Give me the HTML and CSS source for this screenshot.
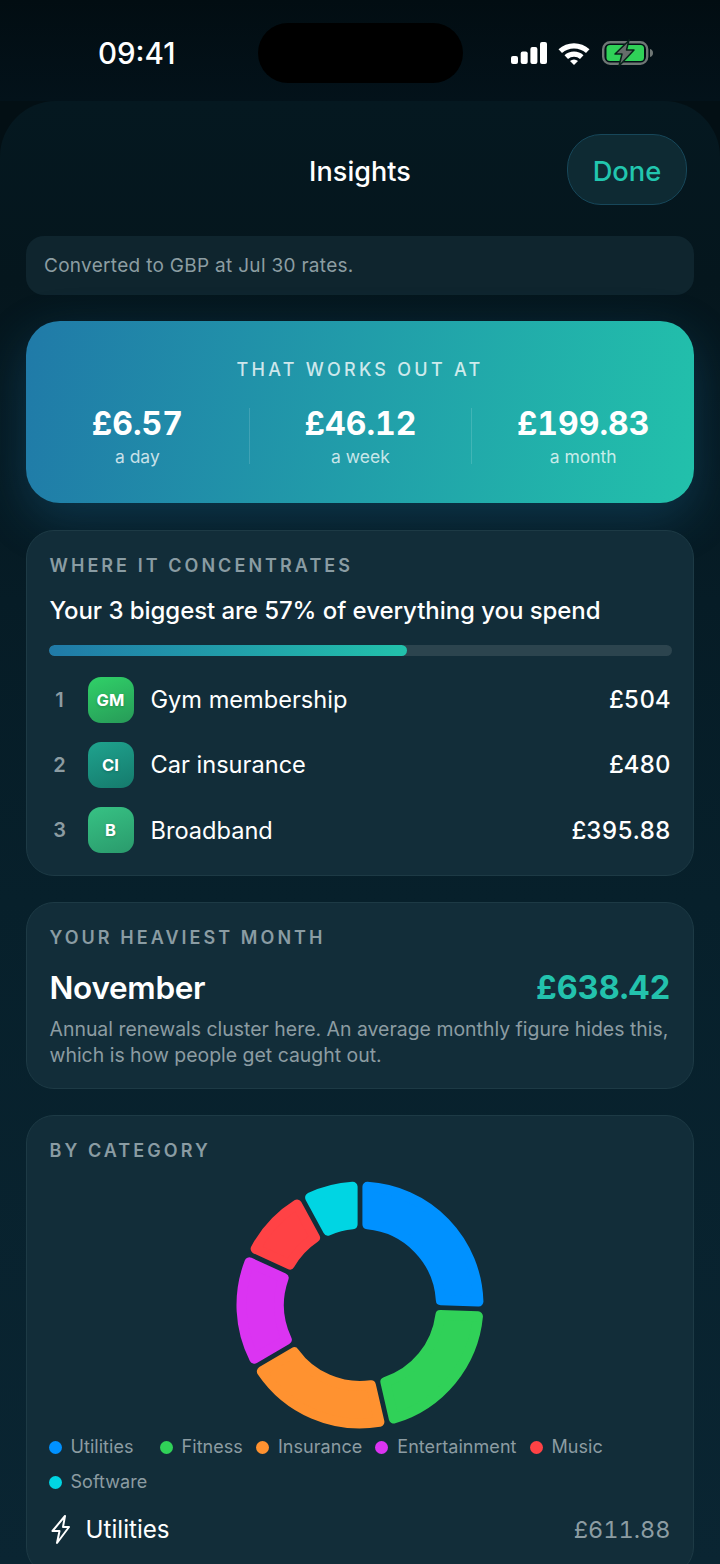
FILE: index.html
```html
<!DOCTYPE html>
<html lang="en">
<head>
<meta charset="utf-8">
<title>Insights</title>
<link rel="stylesheet" href="styles.css">
</head>
<body>
<div class="phone">
  <header class="status">
    <span class="time">09:41</span>
    <span class="island"></span>
    <span class="status-icons">
      <svg class="signal" width="36" height="22" viewBox="0 0 36 22"><rect x="0" y="14" width="7" height="8" rx="2"/><rect x="9.700" y="9.500" width="7" height="12.500" rx="2"/><rect x="19.400" y="5" width="7" height="17" rx="2"/><rect x="29" y="0" width="7" height="22" rx="2"/></svg>
      <svg class="wifi" width="32" height="23" viewBox="0 0 32 23"><path d="M.5 7.200A23 23 0 0 1 31.500 7.200L28 11A18 18 0 0 0 4 11Z"/><path d="M6.500 13.300A14 14 0 0 1 25.500 13.300L22 17A9 9 0 0 0 10 17Z"/><path d="M12 19A6 6 0 0 1 20 19L16 23Z"/></svg>
      <svg class="battery" width="52" height="28" viewBox="0 0 52 28"><rect x="1.200" y="3.200" width="44" height="21.600" rx="7" fill="none" stroke="#6f7775" stroke-width="2.400"/><rect x="4.500" y="6" width="37.500" height="16" rx="3.500" fill="#30d158"/><path d="M48 10c2 .5 3 2 3 4s-1 3.500-3 4Z" fill="#6f7775"/><path d="M27.500 1 13 15h7l-3 12 15-16h-7.500l2.500-10Z" fill="#666d6b" stroke="#08231a" stroke-width="1.500" stroke-linejoin="round"/></svg>
    </span>
  </header>

  <main class="sheet">
    <div class="nav">
      <h1 class="nav-title">Insights</h1>
      <button class="done">Done</button>
    </div>

    <p class="note">Converted to GBP at Jul 30 rates.</p>

    <section class="hero">
      <h2 class="hero-label">THAT WORKS OUT AT</h2>
      <div class="hero-stats">
        <div class="stat"><strong class="stat-value">£6.57</strong><span class="stat-sub">a day</span></div>
        <div class="stat stat-div"><strong class="stat-value">£46.12</strong><span class="stat-sub">a week</span></div>
        <div class="stat stat-div"><strong class="stat-value">£199.83</strong><span class="stat-sub">a month</span></div>
      </div>
    </section>

    <section class="card card-top">
      <h2 class="label">WHERE IT CONCENTRATES</h2>
      <p class="headline">Your 3 biggest are 57% of everything you spend</p>
      <div class="bar"><div class="bar-fill"></div></div>
      <ul class="rank-list">
        <li class="rank-row"><span class="rank">1</span><span class="badge badge-gm">GM</span><span class="rank-name">Gym membership</span><span class="rank-amt">£504</span></li>
        <li class="rank-row"><span class="rank">2</span><span class="badge badge-ci">CI</span><span class="rank-name">Car insurance</span><span class="rank-amt">£480</span></li>
        <li class="rank-row"><span class="rank">3</span><span class="badge badge-b">B</span><span class="rank-name">Broadband</span><span class="rank-amt">£395.88</span></li>
      </ul>
    </section>

    <section class="card card-month">
      <h2 class="label">YOUR HEAVIEST MONTH</h2>
      <div class="month-row"><span class="month-name">November</span><span class="month-amt">£638.42</span></div>
      <p class="month-desc">Annual renewals cluster here. An average monthly figure hides this, which is how people get caught out.</p>
    </section>

    <section class="card card-cat">
      <h2 class="label">BY CATEGORY</h2>
      <svg class="donut" width="248" height="248" viewBox="0 0 248 248">
        <path class="seg seg-blue" d="M131.4 5.73A118.5 118.5 0 0 1 242.45 120.53L204.86 119.28A81 81 0 0 0 131.4 43.34Z"/>
        <path class="seg seg-green" d="M241.96 135.32A118.5 118.5 0 0 1 157.81 237.57L149.36 200.93A81 81 0 0 0 204.37 134.07Z"/>
        <path class="seg seg-orange" d="M143.39 240.9A118.5 118.5 0 0 1 25.85 190.4L58.25 171.31A81 81 0 0 0 134.94 204.26Z"/>
        <path class="seg seg-purple" d="M18.34 177.65A118.5 118.5 0 0 1 13.45 81.3L47.63 97.01A81 81 0 0 0 50.75 158.57Z"/>
        <path class="seg seg-red" d="M19.64 67.86A118.5 118.5 0 0 1 61.06 23.59L79.01 56.64A81 81 0 0 0 53.81 83.58Z"/>
        <path class="seg seg-cyan" d="M74.08 16.53A118.5 118.5 0 0 1 116.6 5.73L116.6 43.34A81 81 0 0 0 92.01 49.58Z"/>
      </svg>
      <ul class="legend">
        <li class="legend-item legend-first"><span class="dot dot-blue"></span>Utilities</li>
        <li class="legend-item"><span class="dot dot-green"></span>Fitness</li>
        <li class="legend-item"><span class="dot dot-orange"></span>Insurance</li>
        <li class="legend-item"><span class="dot dot-purple"></span>Entertainment</li>
        <li class="legend-item"><span class="dot dot-red"></span>Music</li>
        <li class="legend-item"><span class="dot dot-cyan"></span>Software</li>
      </ul>
      <div class="cat-row">
        <svg class="bolt" width="22" height="31" viewBox="0 0 22 31" fill="none" stroke="#fff" stroke-width="2" stroke-linejoin="round"><path d="M15 2 2.500 17h7L7 29l12-16h-6Z"/></svg>
        <span class="cat-name">Utilities</span>
        <span class="cat-amt">£611.88</span>
      </div>
    </section>
  </main>
</div>
</body>
</html>
```
FILE: styles.css
```css
* { box-sizing: border-box; }
html, body { margin: 0; padding: 0; }
body {
  width: 720px;
  height: 1564px;
  overflow: hidden;
  background: #030f14;
  font-family: Inter, "Liberation Sans", sans-serif;
  color: #fff;
}
h1, h2, p, ul { margin: 0; padding: 0; list-style: none; }
.phone { width: 720px; height: 1564px; display: flex; flex-direction: column; overflow: hidden; }

.status {
  height: 101px;
  flex: none;
  display: grid;
  grid-template-columns: 258px 205px 1fr;
  background: linear-gradient(180deg, #020d12, #03121a);
}
.time {
  font-size: 29.500px;
  font-weight: 500;
  line-height: 30px;
  padding-top: 38px;
  padding-left: 98px;
}
.island { margin-top: 23px; height: 60px; background: #000; border-radius: 30px; }
.status-icons { display: flex; align-items: flex-start; padding: 42px 0 0 48px; gap: 11px; }
.signal, .wifi { fill: #fff; }
.battery { margin-top: -3px; margin-left: 1px; }

.sheet {
  flex: 1;
  padding: 0 26px;
  border-radius: 56px 56px 0 0;
  background: linear-gradient(180deg, #051820 0, #05161d 180px, #061c26 500px, #07202b 800px, #0a2532 1464px);
}

.nav {
  height: 135px;
  display: grid;
  grid-template-columns: 1fr auto 1fr;
  align-items: start;
  padding: 33px 7px 0 7px;
}
.nav-title {
  grid-column: 2;
  font-size: 27px;
  font-weight: 500;
  line-height: 75px;
  letter-spacing: .05px;
}
.done {
  grid-column: 3;
  justify-self: end;
  width: 120px;
  height: 71px;
  border-radius: 34px;
  border: 1.500px solid #17475a;
  background: #0e2a33;
  color: #22c6af;
  font: 500 27.300px Inter, "Liberation Sans", sans-serif;
  padding: 3px 0 0;
}

.note {
  height: 59px;
  margin-bottom: 26px;
  padding-left: 18px;
  border-radius: 18px;
  background: #0f252e;
  color: #8c9da2;
  font-size: 19px;
  line-height: 59px;
  letter-spacing: .3px;
}

.hero {
  height: 182px;
  margin-bottom: 27px;
  border-radius: 34px;
  background: linear-gradient(100deg, #207aa8 0, #22c1ab 100%);
  box-shadow: 0 16px 48px rgba(30, 120, 170, .3);
  text-align: center;
}
.hero-label {
  padding-top: 37px;
  font-size: 18px;
  font-weight: 500;
  line-height: 24px;
  letter-spacing: 3.250px;
  color: rgba(255, 255, 255, .78);
}
.hero-stats { display: grid; grid-template-columns: repeat(3, 1fr); margin-top: 26px; }
.stat { height: 56px; display: flex; flex-direction: column; align-items: center; }
.stat-div { border-left: 1px solid rgba(255, 255, 255, .14); }
.stat-value { font-size: 32px; font-weight: 700; line-height: 32px; font-variant-numeric: tabular-nums; }
.stat-sub { font-size: 17.500px; line-height: 22px; margin-top: 6px; color: rgba(255, 255, 255, .76); }

.card {
  margin-bottom: 26px;
  border-radius: 28px;
  border: 1.500px solid #1d3a45;
  background: #122d39;
  padding: 0 22.500px;
}
.label {
  font-size: 18px;
  font-weight: 600;
  line-height: 24px;
  letter-spacing: 3.050px;
  color: #8a9ca3;
}
.card-top { height: 346px; padding-top: 23px; }
.headline { margin-top: 17px; font-size: 24px; font-weight: 500; line-height: 32px; letter-spacing: -.06px; }
.bar { margin: 18px -1px 0; height: 11px; border-radius: 6px; background: #2c444e; overflow: hidden; }
.bar-fill { width: 57.500%; height: 100%; border-radius: 6px; background: linear-gradient(90deg, #207aa8, #22c1ab); }

.rank-list { margin-top: 11px; }
.rank-row { height: 65.300px; display: flex; align-items: center; }
.rank { width: 20px; text-align: center; font-size: 20px; font-weight: 600; color: #8c9ca2; }
.badge {
  width: 46px;
  height: 46px;
  margin-left: 18px;
  border-radius: 13px;
  display: flex;
  align-items: center;
  justify-content: center;
  font-size: 16.500px;
  font-weight: 700;
  text-shadow: 0 1px 3px rgba(0, 0, 0, .2);
}
.badge-gm { background: linear-gradient(160deg, #30d168, #279a58); }
.badge-ci { background: linear-gradient(160deg, #1fa38e, #157a6c); }
.badge-b { background: linear-gradient(160deg, #37c284, #2a9a6c); }
.rank-name { margin-left: 17px; font-size: 23.600px; flex: 1; }
.rank-amt { font-size: 24px; font-weight: 500; font-variant-numeric: tabular-nums; }

.card-month { height: 187px; padding-top: 23px; }
.month-row { margin-top: 16px; display: flex; justify-content: space-between; align-items: center; height: 42px; }
.month-name { font-size: 31.500px; font-weight: 600; letter-spacing: -.3px; }
.month-amt { font-size: 32.500px; font-weight: 700; color: #23c2ad; font-variant-numeric: tabular-nums; }
.month-desc { margin-top: 8px; font-size: 19.450px; line-height: 26px; color: #8c9ca2; }

.card-cat { margin-bottom: 0; height: 460px; padding-top: 23px; }
.donut { display: block; margin: 18px auto 0; }
.seg { stroke-width: 10px; stroke-linejoin: round; }
.seg-blue { fill: #0091ff; stroke: #0091ff; }
.seg-green { fill: #30d158; stroke: #30d158; }
.seg-orange { fill: #ff9230; stroke: #ff9230; }
.seg-purple { fill: #db34f2; stroke: #db34f2; }
.seg-red { fill: #ff4245; stroke: #ff4245; }
.seg-cyan { fill: #00d5e3; stroke: #00d5e3; }

.legend { display: flex; flex-wrap: wrap; column-gap: 13px; row-gap: 11px; margin: 6px 0 0 -1px; width: 600px; }
.legend-item { display: flex; align-items: center; gap: 9px; font-size: 18px; line-height: 24px; letter-spacing: .05px; color: #8c9ca2; }
.legend-first { margin-right: 13px; }
.dot { width: 13px; height: 13px; border-radius: 50%; flex: none; }
.dot-blue { background: #0091ff; }
.dot-green { background: #30d158; }
.dot-orange { background: #ff9230; }
.dot-purple { background: #db34f2; }
.dot-red { background: #ff4245; }
.dot-cyan { background: #00d5e3; }

.cat-row { margin-top: 17px; display: flex; align-items: center; height: 36px; }
.bolt { flex: none; }
.cat-name { margin-left: 14px; flex: 1; font-size: 24.200px; }
.cat-amt { font-size: 23.500px; color: #8c9ca2; font-variant-numeric: tabular-nums; }
```
